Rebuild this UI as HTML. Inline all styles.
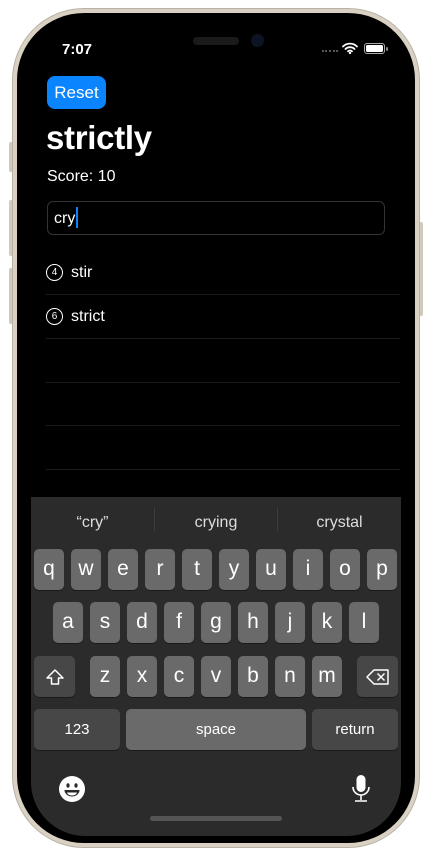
<!DOCTYPE html>
<html><head><meta charset="utf-8"><style>
*{margin:0;padding:0;box-sizing:border-box}
body{width:432px;height:855px;background:#fff;position:relative;overflow:hidden;font-family:"Liberation Sans",sans-serif;color:#fff}
.a{position:absolute}
.btn{background:#d2cbbd;border-radius:2px}
.key{position:absolute;background:#6a6a6a;border-radius:5px;height:41px;width:30px;text-align:center;line-height:39px;font-size:21px;color:#fff;box-shadow:0 1px 0 #1a1a1a}
.sp{background:#474747;font-size:15px}
.sep{position:absolute;left:46px;width:354px;height:1px;background:#1c1c1c}
.num{position:absolute;left:46px;width:17px;height:17px;border:1.5px solid #fff;border-radius:50%;font-size:10px;display:flex;align-items:center;justify-content:center;line-height:1}
</style></head><body>
<div class="a btn" style="left:9px;top:142px;width:5px;height:30px"></div>
<div class="a btn" style="left:9px;top:200px;width:5px;height:56px"></div>
<div class="a btn" style="left:9px;top:268px;width:5px;height:56px"></div>
<div class="a btn" style="left:418px;top:222px;width:5px;height:94px"></div>
<div class="a" style="left:12px;top:8px;width:408px;height:840px;border-radius:72px;background:#d9d2c4;border:1px solid #b9b2a5"></div>
<div class="a" style="left:17px;top:13px;width:398px;height:830px;border-radius:67px;background:#000"></div>
<div class="a" style="left:31px;top:26px;width:370px;height:810px;border-radius:54px;background:#000;overflow:hidden">
  <div class="a" style="left:0;top:471px;width:370px;height:340px;background:#2b2b2b"></div>
</div>
<div class="a" style="left:193px;top:37px;width:46px;height:8px;border-radius:4px;background:#1a1a1a"></div>
<div class="a" style="left:251px;top:34px;width:13px;height:13px;border-radius:50%;background:#0c1424"></div>
<div class="a" style="left:62px;top:41px;font-size:15px;font-weight:bold">7:07</div>
<div class="a" style="left:322px;top:50px;width:16px;height:2px;border-top:2px dotted #555"></div>
<svg class="a" style="left:342px;top:42px" width="16" height="12" viewBox="0 0 16 12"><path d="M1 4.5a10 10 0 0 1 14 0M3.5 7a6.5 6.5 0 0 1 9 0M6 9.3a3 3 0 0 1 4 0" stroke="#fff" stroke-width="1.8" fill="none" stroke-linecap="round"/><circle cx="8" cy="11" r="1.2" fill="#fff"/></svg>
<div class="a" style="left:364px;top:43px;width:21px;height:11px;border:1px solid #aaa;border-radius:3px;padding:1px"><div style="width:100%;height:100%;background:#fff;border-radius:1.5px"></div></div>
<div class="a" style="left:386px;top:47px;width:2px;height:4px;background:#888;border-radius:1px"></div>
<div class="a" style="left:47px;top:76px;width:59px;height:33px;border-radius:8px;background:#0a84ff;font-size:17px;line-height:33px;text-align:center;font-weight:500">Reset</div>
<div class="a" style="left:46px;top:119px;font-size:33px;font-weight:bold;letter-spacing:-0.3px">strictly</div>
<div class="a" style="left:47px;top:168px;font-size:16px">Score: 10</div>
<div class="a" style="left:47px;top:201px;width:338px;height:34px;border:1px solid #333;border-radius:6px"></div>
<div class="a" style="left:54px;top:210px;font-size:16px">cry</div>
<div class="a" style="left:76px;top:207px;width:2px;height:21px;background:#0a84ff"></div>
<div class="num" style="top:264px">4</div>
<div class="a" style="left:71px;top:264px;font-size:16px">stir</div>
<div class="sep" style="top:294px"></div>
<div class="num" style="top:308px">6</div>
<div class="a" style="left:71px;top:308px;font-size:16px">strict</div>
<div class="sep" style="top:338px"></div>
<div class="sep" style="top:382px"></div>
<div class="sep" style="top:425px"></div>
<div class="sep" style="top:469px"></div>
<div class="a" style="left:31px;top:514px;width:123px;text-align:center;font-size:16px;color:#ddd">“cry”</div>
<div class="a" style="left:154px;top:507px;width:1px;height:24px;background:#3d3d3d"></div>
<div class="a" style="left:155px;top:514px;width:122px;text-align:center;font-size:16px;color:#ddd">crying</div>
<div class="a" style="left:277px;top:507px;width:1px;height:24px;background:#3d3d3d"></div>
<div class="a" style="left:278px;top:514px;width:123px;text-align:center;font-size:16px;color:#ddd">crystal</div>
<div class="key" style="left:34px;top:549px">q</div><div class="key" style="left:71px;top:549px">w</div><div class="key" style="left:108px;top:549px">e</div><div class="key" style="left:145px;top:549px">r</div><div class="key" style="left:182px;top:549px">t</div><div class="key" style="left:219px;top:549px">y</div><div class="key" style="left:256px;top:549px">u</div><div class="key" style="left:293px;top:549px">i</div><div class="key" style="left:330px;top:549px">o</div><div class="key" style="left:367px;top:549px">p</div>
<div class="key" style="left:53px;top:602px">a</div><div class="key" style="left:90px;top:602px">s</div><div class="key" style="left:127px;top:602px">d</div><div class="key" style="left:164px;top:602px">f</div><div class="key" style="left:201px;top:602px">g</div><div class="key" style="left:238px;top:602px">h</div><div class="key" style="left:275px;top:602px">j</div><div class="key" style="left:312px;top:602px">k</div><div class="key" style="left:349px;top:602px">l</div>
<div class="key sp" style="left:34px;top:656px;width:41px"><svg width="20" height="18" viewBox="0 0 20 18" style="margin-top:12px"><path d="M10 2L2 10h4.5v6h7v-6H18z" stroke="#fff" stroke-width="1.5" fill="none" stroke-linejoin="round"/></svg></div>
<div class="key" style="left:90px;top:656px">z</div><div class="key" style="left:127px;top:656px">x</div><div class="key" style="left:164px;top:656px">c</div><div class="key" style="left:201px;top:656px">v</div><div class="key" style="left:238px;top:656px">b</div><div class="key" style="left:275px;top:656px">n</div><div class="key" style="left:312px;top:656px">m</div>
<div class="key sp" style="left:357px;top:656px;width:41px"><svg width="24" height="16" viewBox="0 0 24 16" style="margin-top:13px"><path d="M8 1h14v14H8L1 8z" stroke="#fff" stroke-width="1.5" fill="none" stroke-linejoin="round"/><path d="M11.5 4.5l7 7M18.5 4.5l-7 7" stroke="#fff" stroke-width="1.5"/></svg></div>
<div class="key sp" style="left:34px;top:709px;width:86px;line-height:41px">123</div>
<div class="key" style="left:126px;top:709px;width:180px;font-size:15px;line-height:41px">space</div>
<div class="key sp" style="left:312px;top:709px;width:86px;line-height:41px">return</div>
<svg class="a" style="left:58px;top:775px" width="28" height="28" viewBox="0 0 28 28"><circle cx="14" cy="14" r="13" fill="#fff"/><ellipse cx="10" cy="10.5" rx="1.6" ry="2.2" fill="#2b2b2b"/><ellipse cx="18" cy="10.5" rx="1.6" ry="2.2" fill="#2b2b2b"/><path d="M6.5 15h15a7.5 6.5 0 0 1-15 0z" fill="#2b2b2b"/><path d="M9 17.5h10a5 3 0 0 1-10 0z" fill="#fff"/></svg>
<svg class="a" style="left:350px;top:774px" width="22" height="30" viewBox="0 0 22 30"><rect x="6.5" y="1" width="9" height="17" rx="4.5" fill="#fff"/><path d="M3 13a8 8 0 0 0 16 0M11 21v5M5 27h12" stroke="#fff" stroke-width="1.6" fill="none"/></svg>
<div class="a" style="left:150px;top:816px;width:132px;height:5px;border-radius:3px;background:#555"></div>
</body></html>
